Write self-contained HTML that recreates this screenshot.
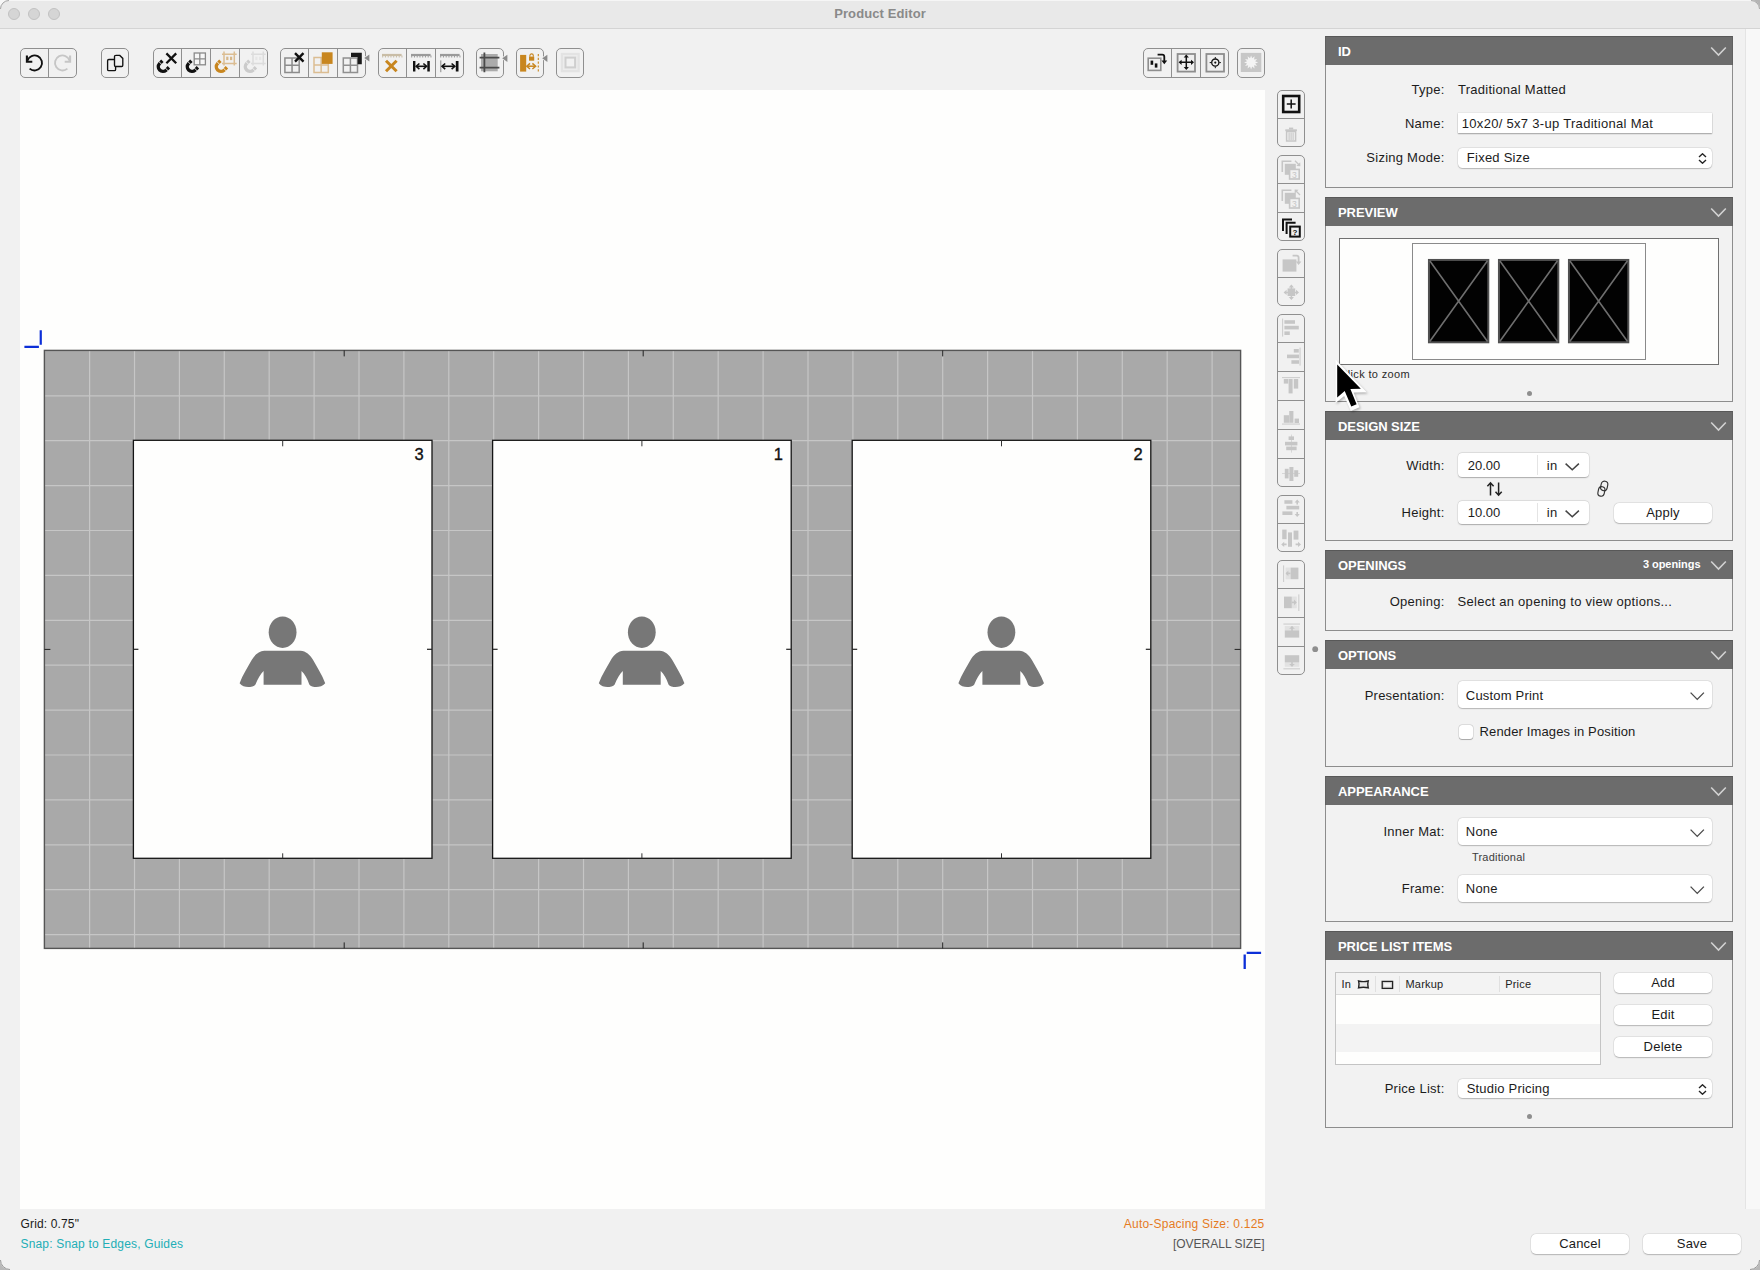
<!DOCTYPE html>
<html><head><meta charset="utf-8"><title>Product Editor</title>
<style>
*{box-sizing:border-box;margin:0;padding:0}
html,body{width:1760px;height:1270px;overflow:hidden;background:#f1f1f1;font-family:"Liberation Sans", sans-serif;color:#1a1a1a}
.a{position:absolute}
.t13{font-size:13px;letter-spacing:0.25px;white-space:nowrap}
.lbl{position:absolute;font-size:13px;letter-spacing:0.2px;white-space:nowrap;text-align:right;color:#1c1c1c}
.panel{position:absolute;left:1325px;width:408px;background:#f2f2f2;border:1px solid #8c8c8c}
.ph{position:absolute;left:-1px;top:-1px;right:-1px;height:29px;background:#6c6c6c;border-top:1px solid #575757}
.ph b{position:absolute;left:12px;top:7px;font-size:13px;color:#fff;font-weight:700;letter-spacing:-0.1px}
.chev{position:absolute;right:8px;top:9px;width:16px;height:10px}
.field{position:absolute;background:#fff;box-shadow:0 0.5px 1.5px rgba(0,0,0,0.28)}
.btn{position:absolute;background:#fff;border-radius:5px;box-shadow:0 0 0 0.5px rgba(0,0,0,0.12),0 1px 1.5px rgba(0,0,0,0.22);font-size:13px;text-align:center;letter-spacing:0.2px}
.tb{position:absolute;border:1px solid #8e8e8e;border-radius:5px;height:30px;top:48px;background:#f0f0f0}
.tbd{position:absolute;top:0;bottom:0;width:1px;background:#8e8e8e}
.vb{position:absolute;border:1px solid #8e8e8e;border-radius:5px;left:1277px;width:28px;background:#f0f0f0}
.vbd{position:absolute;left:0;right:0;height:1px;background:#8e8e8e}
</style></head><body>
<!-- title bar -->
<div class="a" style="left:0;top:0;width:1760px;height:29px;background:#e9e9e9;border-top:1px solid #f6f6f6;border-bottom:1px solid #d4d4d4"></div>
<div class="a" style="left:8px;top:8px;width:12px;height:12px;border-radius:50%;background:#d5d5d5;border:0.5px solid #c2c2c2"></div>
<div class="a" style="left:28px;top:8px;width:12px;height:12px;border-radius:50%;background:#d5d5d5;border:0.5px solid #c2c2c2"></div>
<div class="a" style="left:48px;top:8px;width:12px;height:12px;border-radius:50%;background:#d5d5d5;border:0.5px solid #c2c2c2"></div>
<div class="a" style="left:0;top:6.3px;width:1760px;text-align:center;font-size:13px;font-weight:700;color:#8a8a8a;letter-spacing:0.1px">Product Editor</div>
<!-- scrollbar track -->
<div class="a" style="left:1745px;top:29px;width:15px;height:1180px;background:#f8f8f8;border-left:1px solid #e4e4e4"></div>
<!-- canvas -->
<div class="a" style="left:20px;top:90px;width:1245px;height:1119px;background:#fefefd"></div>
<svg class="a" style="left:0;top:0" width="1760" height="1270" viewBox="0 0 1760 1270"><rect x="44.4" y="350.4" width="1196.20" height="598.00" fill="#a9a9a9"/><line x1="89.60" y1="350.4" x2="89.60" y2="948.4" stroke="#c6c6c6" stroke-width="1.2"/><line x1="134.50" y1="350.4" x2="134.50" y2="948.4" stroke="#c6c6c6" stroke-width="1.2"/><line x1="179.40" y1="350.4" x2="179.40" y2="948.4" stroke="#c6c6c6" stroke-width="1.2"/><line x1="224.30" y1="350.4" x2="224.30" y2="948.4" stroke="#c6c6c6" stroke-width="1.2"/><line x1="269.20" y1="350.4" x2="269.20" y2="948.4" stroke="#c6c6c6" stroke-width="1.2"/><line x1="314.10" y1="350.4" x2="314.10" y2="948.4" stroke="#c6c6c6" stroke-width="1.2"/><line x1="359.00" y1="350.4" x2="359.00" y2="948.4" stroke="#c6c6c6" stroke-width="1.2"/><line x1="403.90" y1="350.4" x2="403.90" y2="948.4" stroke="#c6c6c6" stroke-width="1.2"/><line x1="448.80" y1="350.4" x2="448.80" y2="948.4" stroke="#c6c6c6" stroke-width="1.2"/><line x1="493.70" y1="350.4" x2="493.70" y2="948.4" stroke="#c6c6c6" stroke-width="1.2"/><line x1="538.60" y1="350.4" x2="538.60" y2="948.4" stroke="#c6c6c6" stroke-width="1.2"/><line x1="583.50" y1="350.4" x2="583.50" y2="948.4" stroke="#c6c6c6" stroke-width="1.2"/><line x1="628.40" y1="350.4" x2="628.40" y2="948.4" stroke="#c6c6c6" stroke-width="1.2"/><line x1="673.30" y1="350.4" x2="673.30" y2="948.4" stroke="#c6c6c6" stroke-width="1.2"/><line x1="718.20" y1="350.4" x2="718.20" y2="948.4" stroke="#c6c6c6" stroke-width="1.2"/><line x1="763.10" y1="350.4" x2="763.10" y2="948.4" stroke="#c6c6c6" stroke-width="1.2"/><line x1="808.00" y1="350.4" x2="808.00" y2="948.4" stroke="#c6c6c6" stroke-width="1.2"/><line x1="852.90" y1="350.4" x2="852.90" y2="948.4" stroke="#c6c6c6" stroke-width="1.2"/><line x1="897.80" y1="350.4" x2="897.80" y2="948.4" stroke="#c6c6c6" stroke-width="1.2"/><line x1="942.70" y1="350.4" x2="942.70" y2="948.4" stroke="#c6c6c6" stroke-width="1.2"/><line x1="987.60" y1="350.4" x2="987.60" y2="948.4" stroke="#c6c6c6" stroke-width="1.2"/><line x1="1032.50" y1="350.4" x2="1032.50" y2="948.4" stroke="#c6c6c6" stroke-width="1.2"/><line x1="1077.40" y1="350.4" x2="1077.40" y2="948.4" stroke="#c6c6c6" stroke-width="1.2"/><line x1="1122.30" y1="350.4" x2="1122.30" y2="948.4" stroke="#c6c6c6" stroke-width="1.2"/><line x1="1167.20" y1="350.4" x2="1167.20" y2="948.4" stroke="#c6c6c6" stroke-width="1.2"/><line x1="1212.10" y1="350.4" x2="1212.10" y2="948.4" stroke="#c6c6c6" stroke-width="1.2"/><line x1="44.4" y1="395.80" x2="1240.6" y2="395.80" stroke="#c6c6c6" stroke-width="1.2"/><line x1="44.4" y1="440.70" x2="1240.6" y2="440.70" stroke="#c6c6c6" stroke-width="1.2"/><line x1="44.4" y1="485.60" x2="1240.6" y2="485.60" stroke="#c6c6c6" stroke-width="1.2"/><line x1="44.4" y1="530.50" x2="1240.6" y2="530.50" stroke="#c6c6c6" stroke-width="1.2"/><line x1="44.4" y1="575.40" x2="1240.6" y2="575.40" stroke="#c6c6c6" stroke-width="1.2"/><line x1="44.4" y1="620.30" x2="1240.6" y2="620.30" stroke="#c6c6c6" stroke-width="1.2"/><line x1="44.4" y1="665.20" x2="1240.6" y2="665.20" stroke="#c6c6c6" stroke-width="1.2"/><line x1="44.4" y1="710.10" x2="1240.6" y2="710.10" stroke="#c6c6c6" stroke-width="1.2"/><line x1="44.4" y1="755.00" x2="1240.6" y2="755.00" stroke="#c6c6c6" stroke-width="1.2"/><line x1="44.4" y1="799.90" x2="1240.6" y2="799.90" stroke="#c6c6c6" stroke-width="1.2"/><line x1="44.4" y1="844.80" x2="1240.6" y2="844.80" stroke="#c6c6c6" stroke-width="1.2"/><line x1="44.4" y1="889.70" x2="1240.6" y2="889.70" stroke="#c6c6c6" stroke-width="1.2"/><line x1="44.4" y1="934.60" x2="1240.6" y2="934.60" stroke="#c6c6c6" stroke-width="1.2"/><rect x="44.4" y="350.4" width="1196.20" height="598.00" fill="none" stroke="#555555" stroke-width="1.4"/><line x1="344.2" y1="350.4" x2="344.2" y2="356.4" stroke="#222" stroke-width="1"/><line x1="344.2" y1="942.40" x2="344.2" y2="948.40" stroke="#222" stroke-width="1"/><line x1="643.2" y1="350.4" x2="643.2" y2="356.4" stroke="#222" stroke-width="1"/><line x1="643.2" y1="942.40" x2="643.2" y2="948.40" stroke="#222" stroke-width="1"/><line x1="942.7" y1="350.4" x2="942.7" y2="356.4" stroke="#222" stroke-width="1"/><line x1="942.7" y1="942.40" x2="942.7" y2="948.40" stroke="#222" stroke-width="1"/><line x1="44.4" y1="649.40" x2="50.4" y2="649.40" stroke="#222" stroke-width="1"/><line x1="1234.60" y1="649.40" x2="1240.60" y2="649.40" stroke="#222" stroke-width="1"/><rect x="133.4" y="440.3" width="298.6" height="418.0" fill="#fefefd" stroke="#151515" stroke-width="1.3"/><line x1="282.70" y1="440.3" x2="282.70" y2="446.3" stroke="#333" stroke-width="1"/><line x1="282.70" y1="853.3" x2="282.70" y2="858.3" stroke="#333" stroke-width="1"/><line x1="133.4" y1="649.30" x2="138.4" y2="649.30" stroke="#222" stroke-width="1.2"/><line x1="427.00" y1="649.30" x2="432.00" y2="649.30" stroke="#222" stroke-width="1.2"/><text x="423.80" y="459.8" text-anchor="end" font-family='"Liberation Sans"' font-size="16.5" fill="#111" stroke="#111" stroke-width="0.35">3</text><g transform="translate(282.60,608)" fill="#777777"><ellipse cx="0" cy="24.2" rx="13.9" ry="15.8"/><path d="M -18.3 42.7 L 17.9 42.7 C 23 42.7 27.8 47 30.5 52.1 C 34.5 59.5 39.5 67 42.6 75.2 C 40 78.5 35.5 79.3 31.8 78.9 C 28.5 78.5 26.6 77.2 26.4 75.8 C 25 71 22 66 18.9 63 L 18.9 76.8 L -19 76.8 L -19 63 C -22 66 -25 71 -26.8 75.8 C -27 77.2 -29 78.5 -32.5 78.9 C -36.2 79.3 -40.6 78.5 -43 75.2 C -39.9 67 -34.9 59.5 -30.9 52.1 C -28.2 47 -23.4 42.7 -18.3 42.7 Z"/></g><rect x="492.6" y="440.3" width="298.6" height="418.0" fill="#fefefd" stroke="#151515" stroke-width="1.3"/><line x1="641.90" y1="440.3" x2="641.90" y2="446.3" stroke="#333" stroke-width="1"/><line x1="641.90" y1="853.3" x2="641.90" y2="858.3" stroke="#333" stroke-width="1"/><line x1="492.6" y1="649.30" x2="497.6" y2="649.30" stroke="#222" stroke-width="1.2"/><line x1="786.20" y1="649.30" x2="791.20" y2="649.30" stroke="#222" stroke-width="1.2"/><text x="783.00" y="459.8" text-anchor="end" font-family='"Liberation Sans"' font-size="16.5" fill="#111" stroke="#111" stroke-width="0.35">1</text><g transform="translate(641.80,608)" fill="#777777"><ellipse cx="0" cy="24.2" rx="13.9" ry="15.8"/><path d="M -18.3 42.7 L 17.9 42.7 C 23 42.7 27.8 47 30.5 52.1 C 34.5 59.5 39.5 67 42.6 75.2 C 40 78.5 35.5 79.3 31.8 78.9 C 28.5 78.5 26.6 77.2 26.4 75.8 C 25 71 22 66 18.9 63 L 18.9 76.8 L -19 76.8 L -19 63 C -22 66 -25 71 -26.8 75.8 C -27 77.2 -29 78.5 -32.5 78.9 C -36.2 79.3 -40.6 78.5 -43 75.2 C -39.9 67 -34.9 59.5 -30.9 52.1 C -28.2 47 -23.4 42.7 -18.3 42.7 Z"/></g><rect x="852.2" y="440.3" width="298.6" height="418.0" fill="#fefefd" stroke="#151515" stroke-width="1.3"/><line x1="1001.50" y1="440.3" x2="1001.50" y2="446.3" stroke="#333" stroke-width="1"/><line x1="1001.50" y1="853.3" x2="1001.50" y2="858.3" stroke="#333" stroke-width="1"/><line x1="852.2" y1="649.30" x2="857.2" y2="649.30" stroke="#222" stroke-width="1.2"/><line x1="1145.80" y1="649.30" x2="1150.80" y2="649.30" stroke="#222" stroke-width="1.2"/><text x="1142.60" y="459.8" text-anchor="end" font-family='"Liberation Sans"' font-size="16.5" fill="#111" stroke="#111" stroke-width="0.35">2</text><g transform="translate(1001.40,608)" fill="#777777"><ellipse cx="0" cy="24.2" rx="13.9" ry="15.8"/><path d="M -18.3 42.7 L 17.9 42.7 C 23 42.7 27.8 47 30.5 52.1 C 34.5 59.5 39.5 67 42.6 75.2 C 40 78.5 35.5 79.3 31.8 78.9 C 28.5 78.5 26.6 77.2 26.4 75.8 C 25 71 22 66 18.9 63 L 18.9 76.8 L -19 76.8 L -19 63 C -22 66 -25 71 -26.8 75.8 C -27 77.2 -29 78.5 -32.5 78.9 C -36.2 79.3 -40.6 78.5 -43 75.2 C -39.9 67 -34.9 59.5 -30.9 52.1 C -28.2 47 -23.4 42.7 -18.3 42.7 Z"/></g><path d="M24.4 346.9 H38.9 M40.75 330.2 V344.8" stroke="#0c2fd8" stroke-width="2.2" fill="none"/><path d="M1246.7 952.8 H1261.1 M1244.7 954.6 V968.9" stroke="#0c2fd8" stroke-width="2.3" fill="none"/></svg>
<svg class="a" style="left:0;top:0" width="1760" height="720" viewBox="0 0 1760 720"><rect x="20.5" y="48.5" width="56" height="29" rx="4.5" fill="#f1f1f1" stroke="#8f8f8f" stroke-width="1"/><line x1="48.5" y1="49" x2="48.5" y2="77" stroke="#8f8f8f" stroke-width="1"/><g transform="translate(20,48)"><path d="M7.4 12.6 A7.5 7.5 0 1 1 9.6 20.6" fill="none" stroke="#111" stroke-width="1.9"/><path d="M6.9 7.4 V13.8 H12.3" fill="none" stroke="#111" stroke-width="2.1"/></g><g transform="translate(49,48)"><path d="M20.6 12.6 A7.5 7.5 0 1 0 18.4 20.6" fill="none" stroke="#c6c6c6" stroke-width="1.9"/><path d="M21.1 7.4 V13.8 H15.7" fill="none" stroke="#c6c6c6" stroke-width="2.1"/></g><rect x="101.5" y="48.5" width="27" height="29" rx="4.5" fill="#f1f1f1" stroke="#8f8f8f" stroke-width="1"/><g transform="translate(101,48)"><path d="M13.6 11.5 H7.8 Q6.6 11.5 6.6 12.7 V21.4 Q6.6 22.6 7.8 22.6 H13.4 Q14.6 22.6 14.6 21.4 V18.6" fill="none" stroke="#111" stroke-width="1.35"/><path d="M14.6 7.4 H18.8 L21.8 10.4 V17.3 Q21.8 18.5 20.6 18.5 H14.7 Q13.5 18.5 13.5 17.3 V8.6 Q13.5 7.4 14.7 7.4 Z" fill="none" stroke="#111" stroke-width="1.35"/></g><rect x="153.5" y="48.5" width="114" height="29" rx="4.5" fill="#f1f1f1" stroke="#8f8f8f" stroke-width="1"/><line x1="181.5" y1="49" x2="181.5" y2="77" stroke="#8f8f8f" stroke-width="1"/><line x1="210.5" y1="49" x2="210.5" y2="77" stroke="#8f8f8f" stroke-width="1"/><line x1="239.5" y1="49" x2="239.5" y2="77" stroke="#8f8f8f" stroke-width="1"/><g transform="translate(153,48)"><path d="M9.4 12.8 L6.55 15.65 A4.6 4.6 0 0 0 13.05 22.15 L15.9 19.3" fill="none" stroke="#111" stroke-width="3.4"/><line x1="5.5" y1="13.2" x2="9.0" y2="16.7" stroke="#f1f1f1" stroke-width="0.9"/><line x1="12.0" y1="19.7" x2="15.5" y2="23.2" stroke="#f1f1f1" stroke-width="0.9"/><path d="M13.4 5.4 L23.2 15.2 M23.2 5.4 L13.4 15.2" stroke="#111" stroke-width="2.3"/></g><g transform="translate(182,48)"><path d="M9.4 12.8 L6.55 15.65 A4.6 4.6 0 0 0 13.05 22.15 L15.9 19.3" fill="none" stroke="#111" stroke-width="3.4"/><line x1="5.5" y1="13.2" x2="9.0" y2="16.7" stroke="#f1f1f1" stroke-width="0.9"/><line x1="12.0" y1="19.7" x2="15.5" y2="23.2" stroke="#f1f1f1" stroke-width="0.9"/><rect x="12.2" y="5" width="11.2" height="11.8" fill="#f7f7f7" stroke="#8a8a8a" stroke-width="1.3"/><path d="M17.8 5 V16.8 M12.2 10.9 H23.4" stroke="#8a8a8a" stroke-width="1.3"/></g><g transform="translate(211,48)"><path d="M13 3.5 V17.5 M23.3 3.5 V17.5 M11 6.2 H25.7 M11 15.4 H25.7" stroke="#dbbd92" stroke-width="1.5" fill="none"/><rect x="15.2" y="8.7" width="2.2" height="3.4" fill="#d6b78a"/><rect x="19" y="8.7" width="2.2" height="3.4" fill="#d6b78a"/><path d="M9.4 12.8 L6.55 15.65 A4.6 4.6 0 0 0 13.05 22.15 L15.9 19.3" fill="none" stroke="#c8861f" stroke-width="3.4"/><line x1="5.5" y1="13.2" x2="9.0" y2="16.7" stroke="#f1f1f1" stroke-width="0.9"/><line x1="12.0" y1="19.7" x2="15.5" y2="23.2" stroke="#f1f1f1" stroke-width="0.9"/></g><g transform="translate(240,48)"><path d="M13 3.5 V17.5 M23.3 3.5 V17.5 M11 6.2 H25.7 M11 15.4 H25.7" stroke="#dcdcdc" stroke-width="1.5" fill="none"/><rect x="15.2" y="8.7" width="2.2" height="3.4" fill="#e6e6e6"/><rect x="19" y="8.7" width="2.2" height="3.4" fill="#e6e6e6"/><path d="M9.4 12.8 L6.55 15.65 A4.6 4.6 0 0 0 13.05 22.15 L15.9 19.3" fill="none" stroke="#cbcbcb" stroke-width="3.4"/><line x1="5.5" y1="13.2" x2="9.0" y2="16.7" stroke="#f1f1f1" stroke-width="0.9"/><line x1="12.0" y1="19.7" x2="15.5" y2="23.2" stroke="#f1f1f1" stroke-width="0.9"/></g><rect x="280.5" y="48.5" width="85" height="29" rx="4.5" fill="#f1f1f1" stroke="#8f8f8f" stroke-width="1"/><line x1="308.5" y1="49" x2="308.5" y2="77" stroke="#8f8f8f" stroke-width="1"/><line x1="337.5" y1="49" x2="337.5" y2="77" stroke="#8f8f8f" stroke-width="1"/><g transform="translate(280,48)"><path d="M4.9 10 H19.2 V24.4 H4.9 Z M12.05 10 V24.4 M4.9 17.2 H19.2" fill="none" stroke="#8c8c8c" stroke-width="1.5"/><path d="M15 5.2 L23.5 13.7 M23.5 5.2 L15 13.7" stroke="#111" stroke-width="2.4"/></g><g transform="translate(309,48)"><path d="M5 9.6 H19.3 V24.4 H5 Z M12.15 9.6 V24.4 M5 17.0 H19.3" fill="none" stroke="#dbbd92" stroke-width="1.5"/><rect x="12.8" y="4.3" width="10.8" height="11.6" fill="#c8861f"/></g><g transform="translate(338,48)"><path d="M5.3 10 H19.5 V24.4 H5.3 Z M12.4 10 V24.4 M5.3 17.2 H19.5" fill="none" stroke="#909090" stroke-width="1.5"/><path d="M13 4.8 H23.8 V16.2 H19.6 V9 H13 Z" fill="#1a1a1a"/></g><path d="M363.0 58 L370.2 52.8 L370.2 63.2 Z" fill="#f1f1f1"/><path d="M364.2 58 L369.4 54.4 L369.4 61.6 Z" fill="#8a8a8a"/><rect x="378.5" y="48.5" width="85" height="29" rx="4.5" fill="#f1f1f1" stroke="#8f8f8f" stroke-width="1"/><line x1="406.5" y1="49" x2="406.5" y2="77" stroke="#8f8f8f" stroke-width="1"/><line x1="435.5" y1="49" x2="435.5" y2="77" stroke="#8f8f8f" stroke-width="1"/><g transform="translate(378,48)"><rect x="4" y="5.9" width="19.6" height="2.2" fill="#c9bda6"/><rect x="4.20" y="7.5" width="1" height="2" fill="#c9bda6"/><rect x="6.95" y="7.5" width="1" height="2" fill="#c9bda6"/><rect x="9.70" y="7.5" width="1" height="2" fill="#c9bda6"/><rect x="12.45" y="7.5" width="1" height="2" fill="#c9bda6"/><rect x="15.20" y="7.5" width="1" height="2" fill="#c9bda6"/><rect x="17.95" y="7.5" width="1" height="2" fill="#c9bda6"/><rect x="20.70" y="7.5" width="1" height="2" fill="#c9bda6"/><rect x="23.45" y="7.5" width="1" height="2" fill="#c9bda6"/><path d="M8 12.8 L18.6 23.3 M18.6 12.8 L8 23.3" stroke="#c8861f" stroke-width="3"/></g><g transform="translate(407,48)"><rect x="4" y="5.9" width="19.6" height="2.2" fill="#9a9a9a"/><rect x="4.20" y="7.5" width="1" height="2" fill="#9a9a9a"/><rect x="6.95" y="7.5" width="1" height="2" fill="#9a9a9a"/><rect x="9.70" y="7.5" width="1" height="2" fill="#9a9a9a"/><rect x="12.45" y="7.5" width="1" height="2" fill="#9a9a9a"/><rect x="15.20" y="7.5" width="1" height="2" fill="#9a9a9a"/><rect x="17.95" y="7.5" width="1" height="2" fill="#9a9a9a"/><rect x="20.70" y="7.5" width="1" height="2" fill="#9a9a9a"/><rect x="23.45" y="7.5" width="1" height="2" fill="#9a9a9a"/><rect x="6" y="13" width="2.4" height="10.5" fill="#111"/><rect x="20.3" y="13" width="2.5" height="10.5" fill="#111"/><path d="M9.7 18.3 H19.1" stroke="#111" stroke-width="1.6"/><path d="M12.399999999999999 15.5 L9.2 18.3 L12.399999999999999 21.1 M16.400000000000002 15.5 L19.6 18.3 L16.400000000000002 21.1" fill="none" stroke="#111" stroke-width="1.6"/></g><g transform="translate(436,48)"><rect x="4" y="5.9" width="19.6" height="2.2" fill="#9a9a9a"/><rect x="4.20" y="7.5" width="1" height="2" fill="#9a9a9a"/><rect x="6.95" y="7.5" width="1" height="2" fill="#9a9a9a"/><rect x="9.70" y="7.5" width="1" height="2" fill="#9a9a9a"/><rect x="12.45" y="7.5" width="1" height="2" fill="#9a9a9a"/><rect x="15.20" y="7.5" width="1" height="2" fill="#9a9a9a"/><rect x="17.95" y="7.5" width="1" height="2" fill="#9a9a9a"/><rect x="20.70" y="7.5" width="1" height="2" fill="#9a9a9a"/><rect x="23.45" y="7.5" width="1" height="2" fill="#9a9a9a"/><rect x="4.3" y="12.4" width="1" height="11.8" fill="#8a8a8a"/><rect x="19.8" y="13" width="2.7" height="10.5" fill="#111"/><path d="M6.5 18.3 H18.3" stroke="#111" stroke-width="1.6"/><path d="M9.2 15.5 L6 18.3 L9.2 21.1 M15.600000000000001 15.5 L18.8 18.3 L15.600000000000001 21.1" fill="none" stroke="#111" stroke-width="1.6"/></g><rect x="476.5" y="48.5" width="27" height="29" rx="4.5" fill="#f1f1f1" stroke="#8f8f8f" stroke-width="1"/><g transform="translate(476,48)"><rect x="5" y="6" width="16.7" height="17.3" fill="#ababab"/><path d="M3.6 9.7 H23.4 M3.6 19.6 H23.4 M8.4 4.6 V24.3" stroke="#4a4a4a" stroke-width="1.8"/></g><path d="M501.0 58.3 L508.2 53.099999999999994 L508.2 63.5 Z" fill="#f1f1f1"/><path d="M502.2 58.3 L507.4 54.699999999999996 L507.4 61.9 Z" fill="#8a8a8a"/><rect x="516.5" y="48.5" width="27" height="29" rx="4.5" fill="#f1f1f1" stroke="#8f8f8f" stroke-width="1"/><g transform="translate(516,48)"><rect x="4.1" y="6.9" width="6.1" height="16.7" fill="#c8861f"/><rect x="13" y="8.6" width="5.2" height="4.1" fill="#c8861f"/><path d="M13.9 8.8 V7.6 A1.7 1.7 0 0 1 17.3 7.6 V8.8" fill="none" stroke="#c8861f" stroke-width="1.1"/><path d="M11.3 18.2 H19.1" stroke="#c8861f" stroke-width="1.5"/><path d="M14.0 15.399999999999999 L10.8 18.2 L14.0 21.0 M16.400000000000002 15.399999999999999 L19.6 18.2 L16.400000000000002 21.0" fill="none" stroke="#c8861f" stroke-width="1.5"/><path d="M22.3 6 V24.5" stroke="#c8861f" stroke-width="1.1" stroke-dasharray="2.2 1.6"/></g><path d="M541.0 58.3 L548.2 53.099999999999994 L548.2 63.5 Z" fill="#f1f1f1"/><path d="M542.2 58.3 L547.4000000000001 54.699999999999996 L547.4000000000001 61.9 Z" fill="#8a8a8a"/><rect x="556.5" y="48.5" width="27" height="29" rx="4.5" fill="#f1f1f1" stroke="#8f8f8f" stroke-width="1"/><g transform="translate(556,48)"><rect x="4.8" y="4.9" width="19" height="19.4" fill="#e3e3e3"/><rect x="7" y="7" width="14.6" height="15" fill="#ececec"/><rect x="9.5" y="9.6" width="9.6" height="9.8" fill="#f1f1f1" stroke="#cfcfcf" stroke-width="2"/></g><rect x="1143.5" y="48.5" width="85" height="29" rx="4.5" fill="#f1f1f1" stroke="#8f8f8f" stroke-width="1"/><line x1="1171.5" y1="49" x2="1171.5" y2="77" stroke="#8f8f8f" stroke-width="1"/><line x1="1200.5" y1="49" x2="1200.5" y2="77" stroke="#8f8f8f" stroke-width="1"/><g transform="translate(1143,48)"><rect x="5.2" y="10.2" width="12.6" height="12.2" fill="#efefef" stroke="#8e8e8e" stroke-width="1.6"/><rect x="7.6" y="12.6" width="2.6" height="4.2" fill="#111"/><rect x="11.8" y="15.4" width="2.6" height="4.2" fill="#111"/><path d="M14.6 6.6 H19.2 Q21.3 6.6 21.3 8.7 V13.2" fill="none" stroke="#111" stroke-width="1.8"/><path d="M18.4 12.4 L21.3 16.2 L24.2 12.4 Z" fill="#111"/></g><g transform="translate(1172,48)"><rect x="5.6" y="6" width="17.4" height="17.6" fill="#efefef" stroke="#8e8e8e" stroke-width="1.8"/><path d="M14.3 7.8 V20.8 M7.8 14.3 H20.8" stroke="#111" stroke-width="1.5"/><path d="M14.3 6.6 L11.700000000000001 9.6 H16.900000000000002 Z M14.3 22 L11.700000000000001 19 H16.900000000000002 Z M6.6 14.3 L9.6 11.700000000000001 V16.900000000000002 Z M22 14.3 L19 11.700000000000001 V16.900000000000002 Z" fill="#111"/></g><g transform="translate(1201,48)"><rect x="5.4" y="6" width="17.6" height="17.6" fill="#efefef" stroke="#8e8e8e" stroke-width="1.8"/><circle cx="14.3" cy="14.6" r="3.6" fill="none" stroke="#111" stroke-width="1.3"/><circle cx="14.3" cy="14.6" r="1.1" fill="#111"/><path d="M14.3 9 V10.6 M14.3 18.6 V20.2 M8.7 14.6 H10.3 M18.3 14.6 H19.9" stroke="#111" stroke-width="1"/></g><rect x="1237.5" y="48.5" width="27" height="29" rx="4.5" fill="#f1f1f1" stroke="#8f8f8f" stroke-width="1"/><g transform="translate(1237,48)"><rect x="3.8" y="4.9" width="20.5" height="19.1" fill="#c7c7c7"/><polygon points="21.10,14.40 18.16,15.49 20.16,17.90 17.07,17.37 17.60,20.46 15.19,18.46 14.10,21.40 13.01,18.46 10.60,20.46 11.13,17.37 8.04,17.90 10.04,15.49 7.10,14.40 10.04,13.31 8.04,10.90 11.13,11.43 10.60,8.34 13.01,10.34 14.10,7.40 15.19,10.34 17.60,8.34 17.07,11.43 20.16,10.90 18.16,13.31" fill="#f4f4f4"/></g><rect x="1277.5" y="90.5" width="27" height="56" rx="4.5" fill="#f1f1f1" stroke="#8f8f8f" stroke-width="1"/><line x1="1278" y1="118.5" x2="1304" y2="118.5" stroke="#8f8f8f" stroke-width="1"/><g transform="translate(1277,90)"><rect x="6.2" y="6" width="16" height="16" fill="#f1f1f1" stroke="#111" stroke-width="2.6"/><path d="M14.2 9.6 V18.4 M9.8 14 H18.6" stroke="#111" stroke-width="1.5"/></g><g transform="translate(1277,119)"><rect x="8.3" y="10.3" width="11.6" height="1.8" fill="#c6c6c6"/><rect x="12" y="8.6" width="4.2" height="1.8" fill="#c6c6c6"/><path d="M9.6 12.6 H18.6 V22 H9.6 Z" fill="none" stroke="#c6c6c6" stroke-width="1.5"/><path d="M12.1 13.4 V21 M14.1 13.4 V21 M16.1 13.4 V21" stroke="#c6c6c6" stroke-width="1.1"/></g><rect x="1277.5" y="155.5" width="27" height="85" rx="4.5" fill="#f1f1f1" stroke="#8f8f8f" stroke-width="1"/><line x1="1278" y1="183.5" x2="1304" y2="183.5" stroke="#8f8f8f" stroke-width="1"/><line x1="1278" y1="212.5" x2="1304" y2="212.5" stroke="#8f8f8f" stroke-width="1"/><g transform="translate(1277,155)"><path d="M5.3 17 V6.2 H14.4" fill="none" stroke="#c6c6c6" stroke-width="1.6"/><rect x="8.6" y="9.6" width="9.4" height="9.4" fill="#c6c6c6" stroke="#c6c6c6" stroke-width="1.6"/><rect x="12.6" y="14.4" width="9.6" height="9.6" fill="#f1f1f1" stroke="#c6c6c6" stroke-width="1.6"/><text x="17.4" y="22.6" text-anchor="middle" font-family="Liberation Sans" font-size="8.5" font-weight="400" fill="#c6c6c6">3</text><path d="M18 5.8 L22.4 10.2" stroke="#c6c6c6" stroke-width="1.3"/><path d="M23.4 11.2 L19.4 11 L23.2 7.2 Z" fill="#c6c6c6"/></g><g transform="translate(1277,184)"><path d="M5.3 17 V6.2 H14.4" fill="none" stroke="#c6c6c6" stroke-width="1.6"/><rect x="8.6" y="9.6" width="9.4" height="9.4" fill="#c6c6c6" stroke="#c6c6c6" stroke-width="1.6"/><rect x="12.6" y="14.4" width="9.6" height="9.6" fill="#f1f1f1" stroke="#c6c6c6" stroke-width="1.6"/><text x="17.4" y="22.6" text-anchor="middle" font-family="Liberation Sans" font-size="8.5" font-weight="400" fill="#c6c6c6">3</text><path d="M19 7 L23 11" stroke="#c6c6c6" stroke-width="1.3"/><path d="M17.6 5.6 L21.6 5.8 L17.8 9.6 Z" fill="#c6c6c6"/></g><g transform="translate(1277,213)"><path d="M6 18 V6.4 H15" fill="none" stroke="#111" stroke-width="2"/><path d="M9.6 21 V9.8 H18.6" fill="none" stroke="#111" stroke-width="2"/><rect x="13.2" y="13.6" width="9.6" height="10" fill="#f1f1f1" stroke="#111" stroke-width="2"/><text x="18" y="22" text-anchor="middle" font-family="Liberation Sans" font-size="8" font-weight="700" fill="#111">?</text></g><rect x="1277.5" y="249.5" width="27" height="56" rx="4.5" fill="#f1f1f1" stroke="#8f8f8f" stroke-width="1"/><line x1="1278" y1="277.5" x2="1304" y2="277.5" stroke="#8f8f8f" stroke-width="1"/><g transform="translate(1277,249)"><rect x="5.6" y="10.4" width="13.8" height="12.2" fill="#c6c6c6"/><path d="M15.6 6.6 H19.6 Q21.6 6.6 21.6 8.6 V13" fill="none" stroke="#c6c6c6" stroke-width="1.8"/><path d="M18.8 12.4 L21.6 16 L24.4 12.4 Z" fill="#c6c6c6"/></g><g transform="translate(1277,278)"><rect x="10.6" y="10.4" width="7.6" height="7.6" fill="#c6c6c6"/><path d="M14.4 7.8 V20.8 M7.8 14.4 H20.8" stroke="#c6c6c6" stroke-width="1.5"/><path d="M14.4 6.6 L11.700000000000001 9.6 H16.900000000000002 Z M14.4 22 L11.700000000000001 19 H16.900000000000002 Z M6.6 14.4 L9.6 11.700000000000001 V16.900000000000002 Z M22 14.4 L19 11.700000000000001 V16.900000000000002 Z" fill="#c6c6c6"/></g><rect x="1277.5" y="314.5" width="27" height="172" rx="4.5" fill="#f1f1f1" stroke="#8f8f8f" stroke-width="1"/><line x1="1278" y1="342.5" x2="1304" y2="342.5" stroke="#8f8f8f" stroke-width="1"/><line x1="1278" y1="371.5" x2="1304" y2="371.5" stroke="#8f8f8f" stroke-width="1"/><line x1="1278" y1="400.5" x2="1304" y2="400.5" stroke="#8f8f8f" stroke-width="1"/><line x1="1278" y1="429.5" x2="1304" y2="429.5" stroke="#8f8f8f" stroke-width="1"/><line x1="1278" y1="458.5" x2="1304" y2="458.5" stroke="#8f8f8f" stroke-width="1"/><g transform="translate(1277,314)"><rect x="5.2" y="4.6" width="0.9" height="18" fill="#c6c6c6"/><rect x="7.4" y="6.2" width="10.6" height="3.6" fill="#c6c6c6"/><rect x="7.4" y="11.8" width="14.4" height="3.6" fill="#c6c6c6"/><rect x="7.4" y="17.4" width="5.4" height="3.6" fill="#c6c6c6"/></g><g transform="translate(1277,343)"><rect x="22.6" y="4.6" width="0.9" height="18" fill="#c6c6c6"/><rect x="16.8" y="6" width="5" height="3.6" fill="#c6c6c6"/><rect x="10" y="11.6" width="12" height="3.6" fill="#c6c6c6"/><rect x="14.4" y="17.2" width="7.6" height="3.6" fill="#c6c6c6"/></g><g transform="translate(1277,372)"><rect x="5" y="5.2" width="18" height="0.9" fill="#c6c6c6"/><rect x="6.8" y="7" width="4.4" height="4.6" fill="#c6c6c6"/><rect x="11.6" y="7" width="4" height="14.4" fill="#c6c6c6"/><rect x="16.8" y="7" width="4.4" height="9.6" fill="#c6c6c6"/></g><g transform="translate(1277,401)"><rect x="5" y="22.6" width="18" height="0.9" fill="#c6c6c6"/><rect x="6.8" y="14.2" width="5.2" height="7.6" fill="#c6c6c6"/><rect x="12.2" y="10" width="4.2" height="11.8" fill="#c6c6c6"/><rect x="17.6" y="17.6" width="4.4" height="4.4" fill="#c6c6c6"/></g><g transform="translate(1277,430)"><rect x="14" y="4.6" width="0.6" height="18" fill="#c6c6c6"/><rect x="11.6" y="6.4" width="5.4" height="3.6" fill="#c6c6c6"/><rect x="8" y="11.8" width="12.4" height="3.6" fill="#c6c6c6"/><rect x="9.2" y="16.6" width="10.4" height="3.6" fill="#c6c6c6"/></g><g transform="translate(1277,459)"><rect x="5" y="14" width="18" height="0.6" fill="#c6c6c6"/><rect x="7.8" y="9.8" width="3.8" height="9.6" fill="#c6c6c6"/><rect x="12.4" y="8" width="4" height="14" fill="#c6c6c6"/><rect x="17.2" y="11.2" width="4" height="6.6" fill="#c6c6c6"/></g><rect x="1277.5" y="495.5" width="27" height="56" rx="4.5" fill="#f1f1f1" stroke="#8f8f8f" stroke-width="1"/><line x1="1278" y1="523.5" x2="1304" y2="523.5" stroke="#8f8f8f" stroke-width="1"/><g transform="translate(1277,495)"><rect x="7.4" y="5.2" width="8" height="3.6" fill="#c6c6c6"/><rect x="9.4" y="10.8" width="12.8" height="3.6" fill="#c6c6c6"/><rect x="5.4" y="16.4" width="10" height="3.6" fill="#c6c6c6"/><path d="M20.2 4.6 L17.6 7.6 H22.8 Z M20.2 22 L17.6 19 H22.8 Z" fill="#c6c6c6"/><path d="M20.2 7 V9.6 M20.2 17 V19.6" stroke="#c6c6c6" stroke-width="1.6"/></g><g transform="translate(1277,524)"><rect x="5.2" y="5.6" width="4.4" height="9.6" fill="#c6c6c6"/><rect x="11" y="8.4" width="4" height="14.4" fill="#c6c6c6"/><rect x="16.6" y="6.6" width="4.8" height="9" fill="#c6c6c6"/><path d="M4.2 20.4 L7.2 17.8 V23 Z M24 20.4 L21 17.8 V23 Z" fill="#c6c6c6"/><path d="M6.8 20.4 H9.6 M18.6 20.4 H21.4" stroke="#c6c6c6" stroke-width="1.6"/></g><rect x="1277.5" y="560.5" width="27" height="114" rx="4.5" fill="#f1f1f1" stroke="#8f8f8f" stroke-width="1"/><line x1="1278" y1="588.5" x2="1304" y2="588.5" stroke="#8f8f8f" stroke-width="1"/><line x1="1278" y1="617.5" x2="1304" y2="617.5" stroke="#8f8f8f" stroke-width="1"/><line x1="1278" y1="646.5" x2="1304" y2="646.5" stroke="#8f8f8f" stroke-width="1"/><g transform="translate(1277,560)"><rect x="6.2" y="5.4" width="0.9" height="16.6" fill="#c6c6c6"/><rect x="8.6" y="7.6" width="5" height="11.6" fill="#e2e2e2"/><rect x="13.6" y="7.6" width="7.8" height="11.6" fill="#c6c6c6"/><path d="M9 13.4 H13.4" stroke="#c6c6c6" stroke-width="1.6"/><path d="M8.6 13.4 L11.4 10.6 V16.2 Z" fill="#c6c6c6"/></g><g transform="translate(1277,589)"><rect x="21.4" y="5.4" width="0.9" height="16.6" fill="#c6c6c6"/><rect x="14.8" y="7.6" width="5" height="11.6" fill="#e2e2e2"/><rect x="7" y="7.6" width="7.8" height="11.6" fill="#c6c6c6"/><path d="M14.8 13.4 H19" stroke="#c6c6c6" stroke-width="1.6"/><path d="M19.8 13.4 L17 10.6 V16.2 Z" fill="#c6c6c6"/></g><g transform="translate(1277,618)"><rect x="6.4" y="5.6" width="16.6" height="0.9" fill="#c6c6c6"/><rect x="7.8" y="8" width="14.4" height="4.4" fill="#e2e2e2"/><rect x="7.8" y="12.4" width="14.4" height="7.2" fill="#c6c6c6"/><path d="M15 8.6 V13" stroke="#c6c6c6" stroke-width="1.6"/><path d="M15 8 L12.2 10.8 H17.8 Z" fill="#c6c6c6"/></g><g transform="translate(1277,647)"><rect x="6.4" y="21.4" width="16.6" height="0.9" fill="#c6c6c6"/><rect x="7.8" y="15.4" width="14.4" height="4.4" fill="#e2e2e2"/><rect x="7.8" y="8.2" width="14.4" height="7.2" fill="#c6c6c6"/><path d="M15 14.8 V19.2" stroke="#c6c6c6" stroke-width="1.6"/><path d="M15 19.8 L12.2 17 H17.8 Z" fill="#c6c6c6"/></g><circle cx="1315.2" cy="649.2" r="2.9" fill="#8e8e8e"/></svg>
<!--VTOOLBAR-->
<div style="position:absolute;left:1325px;top:36px;width:408px;height:152px;background:#f2f2f2;border:1px solid #8d8d8d;"></div><div style="position:absolute;left:1325px;top:36px;width:408px;height:29px;background:#6c6c6c;border-top:1px solid #585858;border-left:1px solid #606060;border-right:1px solid #606060"></div><div style="position:absolute;left:1338px;top:44.80px;font-size:13px;line-height:13px;color:#ffffff;font-weight:700;letter-spacing:-0.05px;white-space:nowrap;">ID</div><svg style="position:absolute;left:1710px;top:46px" width="17" height="11" viewBox="0 0 17 11"><path d="M1.2 1.5 L8.5 9 L15.8 1.5" fill="none" stroke="#d2d2d2" stroke-width="1.6"/></svg><div style="position:absolute;right:315.5px;top:83.10px;font-size:13px;line-height:13px;color:#1c1c1c;font-weight:400;letter-spacing:0.25px;white-space:nowrap;">Type:</div><div style="position:absolute;left:1458px;top:83.10px;font-size:13px;line-height:13px;color:#1c1c1c;font-weight:400;letter-spacing:0.25px;white-space:nowrap;">Traditional Matted</div><div style="position:absolute;right:315.5px;top:117.00px;font-size:13px;line-height:13px;color:#1c1c1c;font-weight:400;letter-spacing:0.25px;white-space:nowrap;">Name:</div><div style="position:absolute;left:1458px;top:113px;width:254px;height:20px;background:#fff;box-shadow:0 0.6px 1.2px rgba(0,0,0,0.30), 0 0 0 0.4px rgba(0,0,0,0.10);"></div><div style="position:absolute;left:1461.8px;top:117.00px;font-size:13px;line-height:13px;color:#1c1c1c;font-weight:400;letter-spacing:0.3px;white-space:nowrap;">10x20/ 5x7 3-up Traditional Mat</div><div style="position:absolute;right:315.5px;top:151.00px;font-size:13px;line-height:13px;color:#1c1c1c;font-weight:400;letter-spacing:0.25px;white-space:nowrap;">Sizing Mode:</div><div style="position:absolute;left:1458px;top:148px;width:254px;height:20px;background:#fff;border-radius:4.5px;box-shadow:0 0.8px 1.2px rgba(0,0,0,0.22), 0 0 0 0.5px rgba(0,0,0,0.08);"></div><div style="position:absolute;left:1466.8px;top:151.00px;font-size:13px;line-height:13px;color:#1c1c1c;font-weight:400;letter-spacing:0.25px;white-space:nowrap;">Fixed Size</div><svg style="position:absolute;left:1698px;top:152.5px" width="9" height="11" viewBox="0 0 9 11"><path d="M1 4 L4.5 0.8 L8 4 M1 7 L4.5 10.2 L8 7" fill="none" stroke="#222" stroke-width="1.4"/></svg><div style="position:absolute;left:1325px;top:197px;width:408px;height:205px;background:#f2f2f2;border:1px solid #8d8d8d;"></div><div style="position:absolute;left:1325px;top:197px;width:408px;height:29px;background:#6c6c6c;border-top:1px solid #585858;border-left:1px solid #606060;border-right:1px solid #606060"></div><div style="position:absolute;left:1338px;top:205.80px;font-size:13px;line-height:13px;color:#ffffff;font-weight:700;letter-spacing:-0.05px;white-space:nowrap;">PREVIEW</div><svg style="position:absolute;left:1710px;top:207px" width="17" height="11" viewBox="0 0 17 11"><path d="M1.2 1.5 L8.5 9 L15.8 1.5" fill="none" stroke="#d2d2d2" stroke-width="1.6"/></svg><div style="position:absolute;left:1339px;top:238px;width:380px;height:127px;background:#fefefd;border:1px solid #707070;"></div><div style="position:absolute;left:1412px;top:243px;width:234px;height:117px;background:#fefefd;border:1px solid #8a8a8a;"></div><svg style="position:absolute;left:0;top:0" width="1760" height="420" viewBox="0 0 1760 420"><rect x="1428.95" y="259.95" width="59.35" height="82.35" fill="#020202" stroke="#505050" stroke-width="2"/><path d="M1429.75 260.75 L1487.5 341.5 M1487.5 260.75 L1429.75 341.5" stroke="#6e6e6e" stroke-width="1.6"/><rect x="1498.95" y="259.95" width="59.35" height="82.35" fill="#020202" stroke="#505050" stroke-width="2"/><path d="M1499.75 260.75 L1557.5 341.5 M1557.5 260.75 L1499.75 341.5" stroke="#6e6e6e" stroke-width="1.6"/><rect x="1568.95" y="259.95" width="59.35" height="82.35" fill="#020202" stroke="#505050" stroke-width="2"/><path d="M1569.75 260.75 L1627.5 341.5 M1627.5 260.75 L1569.75 341.5" stroke="#6e6e6e" stroke-width="1.6"/></svg><div style="position:absolute;right:350px;top:368.69px;font-size:11px;line-height:11px;color:#2a2a2a;font-weight:400;letter-spacing:0.35px;white-space:nowrap;">Click to zoom</div><div style="position:absolute;left:1526.8px;top:390.8px;width:5px;height:5px;border-radius:50%;background:#8e8e8e"></div><div style="position:absolute;left:1325px;top:411px;width:408px;height:130px;background:#f2f2f2;border:1px solid #8d8d8d;"></div><div style="position:absolute;left:1325px;top:411px;width:408px;height:29px;background:#6c6c6c;border-top:1px solid #585858;border-left:1px solid #606060;border-right:1px solid #606060"></div><div style="position:absolute;left:1338px;top:419.80px;font-size:13px;line-height:13px;color:#ffffff;font-weight:700;letter-spacing:-0.05px;white-space:nowrap;">DESIGN SIZE</div><svg style="position:absolute;left:1710px;top:421px" width="17" height="11" viewBox="0 0 17 11"><path d="M1.2 1.5 L8.5 9 L15.8 1.5" fill="none" stroke="#d2d2d2" stroke-width="1.6"/></svg><div style="position:absolute;right:315.5px;top:458.80px;font-size:13px;line-height:13px;color:#1c1c1c;font-weight:400;letter-spacing:0.25px;white-space:nowrap;">Width:</div><div style="position:absolute;left:1458px;top:453px;width:131px;height:24px;background:#fff;border-radius:4px;box-shadow:0 0.6px 1.2px rgba(0,0,0,0.25), 0 0 0 0.4px rgba(0,0,0,0.10);"></div><div style="position:absolute;left:1537px;top:455px;width:1px;height:20px;background:#e4e4e4"></div><div style="position:absolute;left:1467.8px;top:458.80px;font-size:13px;line-height:13px;color:#1c1c1c;font-weight:400;letter-spacing:0.0px;white-space:nowrap;">20.00</div><div style="position:absolute;left:1546.8px;top:458.80px;font-size:13px;line-height:13px;color:#1c1c1c;font-weight:400;letter-spacing:0.2px;white-space:nowrap;">in</div><svg style="position:absolute;left:1564px;top:461.6px" width="16.5" height="9.4" viewBox="0 0 16.5 9.4"><path d="M1.6 1.6 L8.25 7.800000000000001 L14.9 1.6" fill="none" stroke="#444" stroke-width="1.5"/></svg><div style="position:absolute;right:315.5px;top:505.50px;font-size:13px;line-height:13px;color:#1c1c1c;font-weight:400;letter-spacing:0.25px;white-space:nowrap;">Height:</div><div style="position:absolute;left:1458px;top:500.5px;width:131px;height:23.5px;background:#fff;border-radius:4px;box-shadow:0 0.6px 1.2px rgba(0,0,0,0.25), 0 0 0 0.4px rgba(0,0,0,0.10);"></div><div style="position:absolute;left:1537px;top:502.5px;width:1px;height:19.5px;background:#e4e4e4"></div><div style="position:absolute;left:1467.8px;top:505.50px;font-size:13px;line-height:13px;color:#1c1c1c;font-weight:400;letter-spacing:0.0px;white-space:nowrap;">10.00</div><div style="position:absolute;left:1546.8px;top:505.50px;font-size:13px;line-height:13px;color:#1c1c1c;font-weight:400;letter-spacing:0.2px;white-space:nowrap;">in</div><svg style="position:absolute;left:1564px;top:509.1px" width="16.5" height="9.4" viewBox="0 0 16.5 9.4"><path d="M1.6 1.6 L8.25 7.800000000000001 L14.9 1.6" fill="none" stroke="#444" stroke-width="1.5"/></svg><svg style="position:absolute;left:1486px;top:481px" width="18" height="16" viewBox="0 0 18 16"><path d="M4.5 14.5 V2.2 M1.4 5.2 L4.5 1.8 L7.6 5.2 M12.6 1.6 V13.8 M9.5 10.8 L12.6 14.2 L15.7 10.8" fill="none" stroke="#222" stroke-width="1.5"/></svg><svg style="position:absolute;left:1596px;top:479px" width="14" height="19" viewBox="0 0 14 19"><g fill="none" stroke="#333" stroke-width="1.15"><rect x="4.9" y="2.1" width="6.6" height="9.6" rx="3.3" transform="rotate(12 8.2 6.9)"/><rect x="2.2" y="7.6" width="6.4" height="9.6" rx="3.2" transform="rotate(12 5.4 12.4)"/></g></svg><div style="position:absolute;left:1614px;top:503px;width:98px;height:20px;background:#fff;border-radius:5px;box-shadow:0 0.8px 1.2px rgba(0,0,0,0.22), 0 0 0 0.5px rgba(0,0,0,0.07);"></div><div style="position:absolute;left:1463.0px;width:400px;text-align:center;top:505.80px;font-size:13px;line-height:13px;color:#1a1a1a;font-weight:400;letter-spacing:0.2px;white-space:nowrap;">Apply</div><div style="position:absolute;left:1325px;top:550px;width:408px;height:81px;background:#f2f2f2;border:1px solid #8d8d8d;"></div><div style="position:absolute;left:1325px;top:550px;width:408px;height:29px;background:#6c6c6c;border-top:1px solid #585858;border-left:1px solid #606060;border-right:1px solid #606060"></div><div style="position:absolute;left:1338px;top:558.80px;font-size:13px;line-height:13px;color:#ffffff;font-weight:700;letter-spacing:-0.05px;white-space:nowrap;">OPENINGS</div><svg style="position:absolute;left:1710px;top:560px" width="17" height="11" viewBox="0 0 17 11"><path d="M1.2 1.5 L8.5 9 L15.8 1.5" fill="none" stroke="#d2d2d2" stroke-width="1.6"/></svg><div style="position:absolute;right:59.5px;top:559.29px;font-size:11px;line-height:11px;color:#ffffff;font-weight:700;letter-spacing:-0.05px;white-space:nowrap;">3 openings</div><div style="position:absolute;right:315.5px;top:595.30px;font-size:13px;line-height:13px;color:#1c1c1c;font-weight:400;letter-spacing:0.25px;white-space:nowrap;">Opening:</div><div style="position:absolute;left:1457.5px;top:595.30px;font-size:13px;line-height:13px;color:#1c1c1c;font-weight:400;letter-spacing:0.28px;white-space:nowrap;">Select an opening to view options...</div><div style="position:absolute;left:1325px;top:640px;width:408px;height:127px;background:#f2f2f2;border:1px solid #8d8d8d;"></div><div style="position:absolute;left:1325px;top:640px;width:408px;height:29px;background:#6c6c6c;border-top:1px solid #585858;border-left:1px solid #606060;border-right:1px solid #606060"></div><div style="position:absolute;left:1338px;top:648.80px;font-size:13px;line-height:13px;color:#ffffff;font-weight:700;letter-spacing:-0.05px;white-space:nowrap;">OPTIONS</div><svg style="position:absolute;left:1710px;top:650px" width="17" height="11" viewBox="0 0 17 11"><path d="M1.2 1.5 L8.5 9 L15.8 1.5" fill="none" stroke="#d2d2d2" stroke-width="1.6"/></svg><div style="position:absolute;right:315.5px;top:689.00px;font-size:13px;line-height:13px;color:#1c1c1c;font-weight:400;letter-spacing:0.25px;white-space:nowrap;">Presentation:</div><div style="position:absolute;left:1458px;top:681px;width:254px;height:27px;background:#fff;border-radius:4.5px;box-shadow:0 0.8px 1.2px rgba(0,0,0,0.22), 0 0 0 0.5px rgba(0,0,0,0.08);"></div><div style="position:absolute;left:1465.8px;top:689.00px;font-size:13px;line-height:13px;color:#1c1c1c;font-weight:400;letter-spacing:0.2px;white-space:nowrap;">Custom Print</div><svg style="position:absolute;left:1689px;top:691px" width="16.5" height="10" viewBox="0 0 16.5 10"><path d="M1.6 1.6 L8.25 8.4 L14.9 1.6" fill="none" stroke="#4a4a4a" stroke-width="1.35"/></svg><div style="position:absolute;left:1459px;top:724.5px;width:14px;height:14.0px;background:#fff;border-radius:3px;box-shadow:0 0.5px 0.8px rgba(0,0,0,0.25), 0 0 0 0.5px rgba(0,0,0,0.14);"></div><div style="position:absolute;left:1479.5px;top:725.30px;font-size:13px;line-height:13px;color:#1c1c1c;font-weight:400;letter-spacing:0.14px;white-space:nowrap;">Render Images in Position</div><div style="position:absolute;left:1325px;top:776px;width:408px;height:146px;background:#f2f2f2;border:1px solid #8d8d8d;"></div><div style="position:absolute;left:1325px;top:776px;width:408px;height:29px;background:#6c6c6c;border-top:1px solid #585858;border-left:1px solid #606060;border-right:1px solid #606060"></div><div style="position:absolute;left:1338px;top:784.80px;font-size:13px;line-height:13px;color:#ffffff;font-weight:700;letter-spacing:-0.05px;white-space:nowrap;">APPEARANCE</div><svg style="position:absolute;left:1710px;top:786px" width="17" height="11" viewBox="0 0 17 11"><path d="M1.2 1.5 L8.5 9 L15.8 1.5" fill="none" stroke="#d2d2d2" stroke-width="1.6"/></svg><div style="position:absolute;right:315.5px;top:825.30px;font-size:13px;line-height:13px;color:#1c1c1c;font-weight:400;letter-spacing:0.25px;white-space:nowrap;">Inner Mat:</div><div style="position:absolute;left:1458px;top:817.5px;width:254px;height:27.0px;background:#fff;border-radius:4.5px;box-shadow:0 0.8px 1.2px rgba(0,0,0,0.22), 0 0 0 0.5px rgba(0,0,0,0.08);"></div><div style="position:absolute;left:1465.8px;top:825.30px;font-size:13px;line-height:13px;color:#1c1c1c;font-weight:400;letter-spacing:0.2px;white-space:nowrap;">None</div><svg style="position:absolute;left:1689px;top:827.6px" width="16.5" height="10" viewBox="0 0 16.5 10"><path d="M1.6 1.6 L8.25 8.4 L14.9 1.6" fill="none" stroke="#4a4a4a" stroke-width="1.35"/></svg><div style="position:absolute;left:1472px;top:851.99px;font-size:11px;line-height:11px;color:#3c3c3c;font-weight:400;letter-spacing:0.2px;white-space:nowrap;">Traditional</div><div style="position:absolute;right:315.5px;top:882.30px;font-size:13px;line-height:13px;color:#1c1c1c;font-weight:400;letter-spacing:0.25px;white-space:nowrap;">Frame:</div><div style="position:absolute;left:1458px;top:874.5px;width:254px;height:27.0px;background:#fff;border-radius:4.5px;box-shadow:0 0.8px 1.2px rgba(0,0,0,0.22), 0 0 0 0.5px rgba(0,0,0,0.08);"></div><div style="position:absolute;left:1465.8px;top:882.30px;font-size:13px;line-height:13px;color:#1c1c1c;font-weight:400;letter-spacing:0.2px;white-space:nowrap;">None</div><svg style="position:absolute;left:1689px;top:884.6px" width="16.5" height="10" viewBox="0 0 16.5 10"><path d="M1.6 1.6 L8.25 8.4 L14.9 1.6" fill="none" stroke="#4a4a4a" stroke-width="1.35"/></svg><div style="position:absolute;left:1325px;top:931px;width:408px;height:197px;background:#f2f2f2;border:1px solid #8d8d8d;"></div><div style="position:absolute;left:1325px;top:931px;width:408px;height:29px;background:#6c6c6c;border-top:1px solid #585858;border-left:1px solid #606060;border-right:1px solid #606060"></div><div style="position:absolute;left:1338px;top:939.80px;font-size:13px;line-height:13px;color:#ffffff;font-weight:700;letter-spacing:-0.05px;white-space:nowrap;">PRICE LIST ITEMS</div><svg style="position:absolute;left:1710px;top:941px" width="17" height="11" viewBox="0 0 17 11"><path d="M1.2 1.5 L8.5 9 L15.8 1.5" fill="none" stroke="#d2d2d2" stroke-width="1.6"/></svg><div style="position:absolute;left:1335px;top:972px;width:266px;height:93px;background:#fefefd;border:1px solid #c4c4c4;"></div><div style="position:absolute;left:1336px;top:973px;width:264px;height:22px;background:#f3f3f3;border-bottom:1px solid #d8d8d8;"></div><div style="position:absolute;left:1336px;top:1024px;width:264px;height:28px;background:#f3f3f3;"></div><div style="position:absolute;left:1375px;top:976px;width:1px;height:16px;background:#e0e0e0"></div><div style="position:absolute;left:1399px;top:976px;width:1px;height:16px;background:#e0e0e0"></div><div style="position:absolute;left:1499px;top:976px;width:1px;height:16px;background:#e0e0e0"></div><div style="position:absolute;left:1341.4px;top:979.19px;font-size:11px;line-height:11px;color:#222;font-weight:400;letter-spacing:0.2px;white-space:nowrap;">In</div><div style="position:absolute;left:1405.5px;top:979.19px;font-size:11px;line-height:11px;color:#222;font-weight:400;letter-spacing:0.2px;white-space:nowrap;">Markup</div><div style="position:absolute;left:1505.2px;top:979.19px;font-size:11px;line-height:11px;color:#222;font-weight:400;letter-spacing:0.2px;white-space:nowrap;">Price</div><svg style="position:absolute;left:1356px;top:979px" width="15" height="11" viewBox="0 0 15 11"><path d="M2.6 2 Q7.4 3.2 12.2 2 Q11.2 5.4 12.2 8.8 Q7.4 7.6 2.6 8.8 Q3.6 5.4 2.6 2 Z" fill="#e8e8e8" stroke="#222" stroke-width="1.4"/></svg><svg style="position:absolute;left:1381px;top:979.5px" width="13" height="10" viewBox="0 0 13 10"><rect x="1.2" y="1.4" width="10.4" height="7" fill="#d8d8d8" stroke="#222" stroke-width="1.3"/><rect x="3" y="3.2" width="6.8" height="3.4" fill="#f6f6f6"/></svg><div style="position:absolute;left:1614px;top:973px;width:98px;height:20px;background:#fff;border-radius:5px;box-shadow:0 0.8px 1.2px rgba(0,0,0,0.22), 0 0 0 0.5px rgba(0,0,0,0.07);"></div><div style="position:absolute;left:1463.0px;width:400px;text-align:center;top:976.00px;font-size:13px;line-height:13px;color:#1a1a1a;font-weight:400;letter-spacing:0.2px;white-space:nowrap;">Add</div><div style="position:absolute;left:1614px;top:1005px;width:98px;height:20px;background:#fff;border-radius:5px;box-shadow:0 0.8px 1.2px rgba(0,0,0,0.22), 0 0 0 0.5px rgba(0,0,0,0.07);"></div><div style="position:absolute;left:1463.0px;width:400px;text-align:center;top:1008.00px;font-size:13px;line-height:13px;color:#1a1a1a;font-weight:400;letter-spacing:0.2px;white-space:nowrap;">Edit</div><div style="position:absolute;left:1614px;top:1037px;width:98px;height:20px;background:#fff;border-radius:5px;box-shadow:0 0.8px 1.2px rgba(0,0,0,0.22), 0 0 0 0.5px rgba(0,0,0,0.07);"></div><div style="position:absolute;left:1463.0px;width:400px;text-align:center;top:1040.00px;font-size:13px;line-height:13px;color:#1a1a1a;font-weight:400;letter-spacing:0.2px;white-space:nowrap;">Delete</div><div style="position:absolute;right:315.5px;top:1081.50px;font-size:13px;line-height:13px;color:#1c1c1c;font-weight:400;letter-spacing:0.25px;white-space:nowrap;">Price List:</div><div style="position:absolute;left:1458px;top:1079.3px;width:254px;height:19.200000000000045px;background:#fff;border-radius:4.5px;box-shadow:0 0.8px 1.2px rgba(0,0,0,0.22), 0 0 0 0.5px rgba(0,0,0,0.08);"></div><div style="position:absolute;left:1466.7px;top:1081.50px;font-size:13px;line-height:13px;color:#1c1c1c;font-weight:400;letter-spacing:0.2px;white-space:nowrap;">Studio Pricing</div><svg style="position:absolute;left:1698px;top:1083.6px" width="9" height="11" viewBox="0 0 9 11"><path d="M1 4 L4.5 0.8 L8 4 M1 7 L4.5 10.2 L8 7" fill="none" stroke="#222" stroke-width="1.4"/></svg><div style="position:absolute;left:1526.8px;top:1114.3px;width:5px;height:5px;border-radius:50%;background:#8e8e8e"></div><div style="position:absolute;left:1531px;top:1234px;width:98px;height:20px;background:#fff;border-radius:5px;box-shadow:0 0.8px 1.2px rgba(0,0,0,0.22), 0 0 0 0.5px rgba(0,0,0,0.07);"></div><div style="position:absolute;left:1380.0px;width:400px;text-align:center;top:1237.00px;font-size:13px;line-height:13px;color:#1a1a1a;font-weight:400;letter-spacing:0.2px;white-space:nowrap;">Cancel</div><div style="position:absolute;left:1643px;top:1234px;width:98px;height:20px;background:#fff;border-radius:5px;box-shadow:0 0.8px 1.2px rgba(0,0,0,0.22), 0 0 0 0.5px rgba(0,0,0,0.07);"></div><div style="position:absolute;left:1492.0px;width:400px;text-align:center;top:1237.00px;font-size:13px;line-height:13px;color:#1a1a1a;font-weight:400;letter-spacing:0.2px;white-space:nowrap;">Save</div><div style="position:absolute;left:20.5px;top:1218.04px;font-size:12px;line-height:12px;color:#1a1a1a;font-weight:400;letter-spacing:0.15px;white-space:nowrap;">Grid: 0.75"</div><div style="position:absolute;left:20.5px;top:1237.84px;font-size:12px;line-height:12px;color:#22aeb6;font-weight:400;letter-spacing:0.17px;white-space:nowrap;">Snap: Snap to Edges, Guides</div><div style="position:absolute;right:495.5px;top:1218.04px;font-size:12px;line-height:12px;color:#e57b1f;font-weight:400;letter-spacing:0.22px;white-space:nowrap;">Auto-Spacing Size: 0.125</div><div style="position:absolute;right:495.5px;top:1237.84px;font-size:12px;line-height:12px;color:#555555;font-weight:400;letter-spacing:0.0px;white-space:nowrap;">[OVERALL SIZE]</div>
<svg style="position:absolute;left:1325px;top:350px" width="50" height="66" viewBox="1325 350 50 66"><defs><filter id="cs" x="-30%" y="-30%" width="160%" height="160%"><feGaussianBlur stdDeviation="1.2"/></filter></defs><path d="M1335.5 359.5 L1335.5 403 L1344.2 396 L1350.8 411 L1359.5 407.2 L1353.6 392.6 L1366.8 392.2 Z" fill="rgba(0,0,0,0.25)" filter="url(#cs)" transform="translate(1.2,1.6)"/><path d="M1335.5 359.5 L1335.5 403 L1344.2 396 L1350.8 411 L1359.5 407.2 L1353.6 392.6 L1366.8 392.2 Z" fill="#fff"/><path d="M1337.2 364.5 L1337.2 397.6 L1344.7 390.9 L1351.3 406.5 L1356.6 404.3 L1350.4 389 L1360.8 388.7 Z" fill="#000"/></svg>
<svg class="a" style="left:0;top:0" width="1760" height="1270" viewBox="0 0 1760 1270">
<path d="M0 0 H9 A9 9 0 0 0 0 9 Z" fill="#f7f7f7"/><path d="M9 0.5 A8.5 8.5 0 0 0 0.5 9" fill="none" stroke="#a6a6a6" stroke-width="1"/>
<path d="M1760 0 H1751 A9 9 0 0 1 1760 9 Z" fill="#b4b4b4"/><path d="M1751 0.5 A8.5 8.5 0 0 1 1759.5 9" fill="none" stroke="#a6a6a6" stroke-width="1"/>
<path d="M0 1270 V1260 A10 10 0 0 0 10 1270 Z" fill="#b8b8b8"/><path d="M0.5 1260 A9.5 9.5 0 0 0 10 1269.5" fill="none" stroke="#9a9a9a" stroke-width="1"/>
<path d="M1760 1270 V1260 A10 10 0 0 1 1750 1270 Z" fill="#b8b8b8"/><path d="M1759.5 1260 A9.5 9.5 0 0 1 1750 1269.5" fill="none" stroke="#9a9a9a" stroke-width="1"/>
</svg>
</body></html>
